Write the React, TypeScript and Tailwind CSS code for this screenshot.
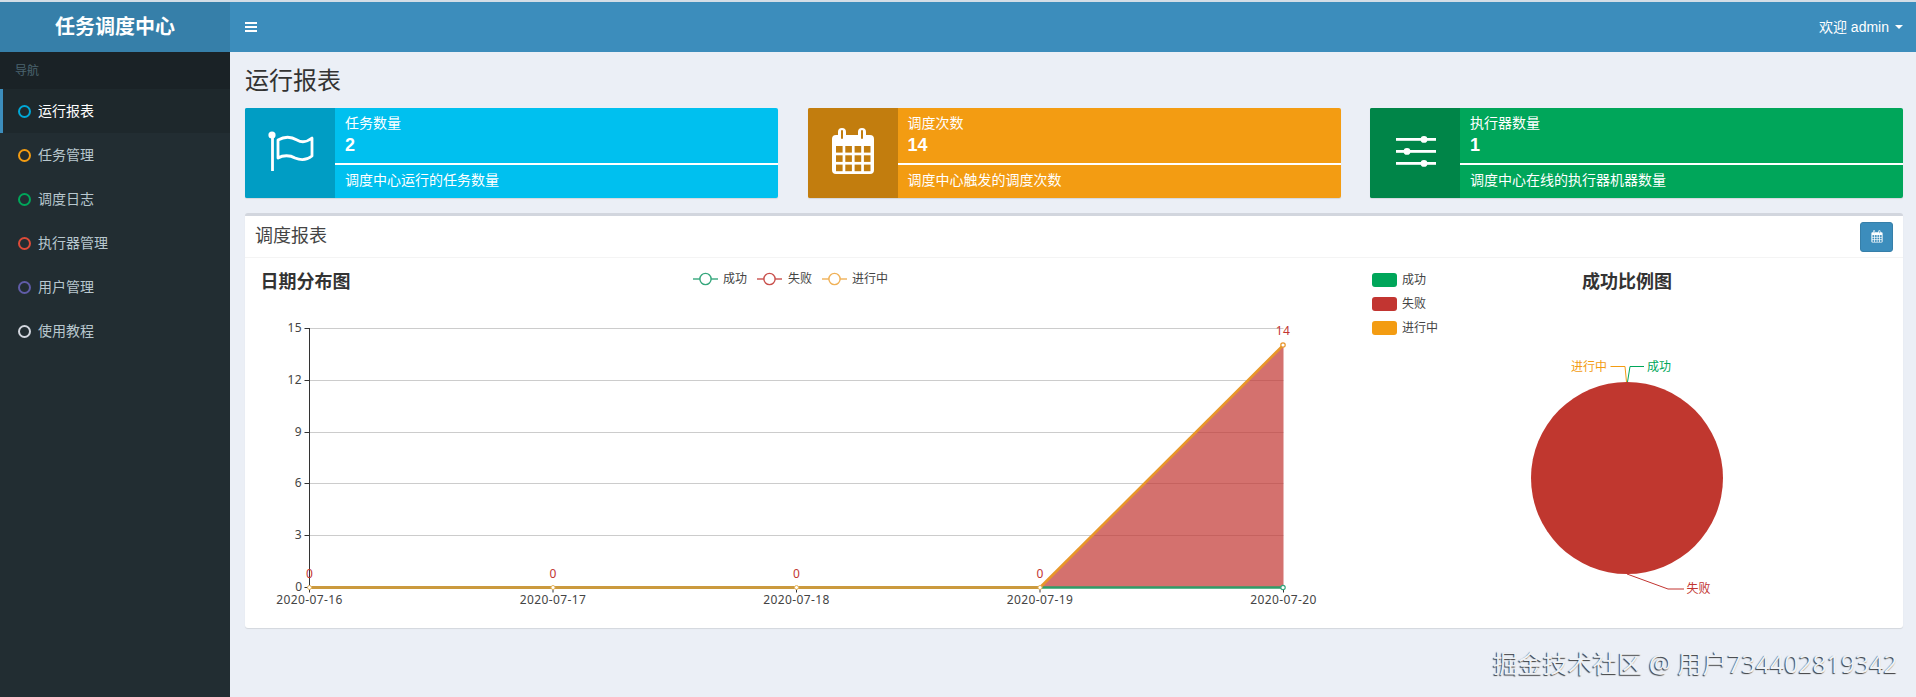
import { ReactNode } from 'react';

const menu = [
  { label: '运行报表', ring: 'border-[#00a7d6]', active: true },
  { label: '任务管理', ring: 'border-[#f39c12]' },
  { label: '调度日志', ring: 'border-[#00a65a]' },
  { label: '执行器管理', ring: 'border-[#dd4b39]' },
  { label: '用户管理', ring: 'border-[#605ca8]' },
  { label: '使用教程', ring: 'border-[#d2d6de]' },
];

function FlagIcon() {
  return (
    <svg viewBox="0 0 90 90" className="w-[90px] h-[90px]" fill="none" stroke="white">
      <circle cx="27" cy="27" r="3.6" fill="white" stroke="none" />
      <path d="M27.5 28V63" strokeWidth="2.8" />
      <path d="M33 32C40 28 47 29 52 32C57 35 62 34 67 30V48C62 52 57 53 50 50C45 47 38 47 33 50Z" strokeWidth="2.8" strokeLinejoin="round" />
    </svg>
  );
}

function CalendarIcon({ className }: { className: string }) {
  const cols = [28, 37.3, 46.6, 55.9];
  const rows = [38, 47.3, 56.6];
  return (
    <svg viewBox="0 0 90 90" className={className}>
      <path d="M24 31a4 4 0 0 1 4-4h2v-3a4 4 0 0 1 8 0v3h12v-3a4 4 0 0 1 8 0v3h4a4 4 0 0 1 4 4v31a4 4 0 0 1-4 4H28a4 4 0 0 1-4-4Z" fill="white" />
      <rect x="33" y="22" width="2" height="9" rx="1" fill="currentColor" />
      <rect x="53" y="22" width="2" height="9" rx="1" fill="currentColor" />
      {rows.map((y) =>
        cols.map((x) => <rect key={`${x}-${y}`} x={x} y={y} width="6.6" height="6.6" fill="currentColor" />)
      )}
    </svg>
  );
}

function SlidersIcon() {
  return (
    <svg viewBox="0 0 90 90" className="w-[90px] h-[90px]" fill="white" stroke="none">
      <rect x="26" y="30" width="40" height="2.8" />
      <rect x="26" y="42" width="40" height="2.8" />
      <rect x="26" y="54" width="40" height="2.8" />
      <circle cx="54" cy="31.4" r="3.4" />
      <circle cx="37" cy="43.4" r="3.4" />
      <circle cx="54" cy="55.4" r="3.4" />
    </svg>
  );
}

function InfoBox(props: { bg: string; iconBg: string; icon: ReactNode; title: string; value: string; desc: string }) {
  return (
    <div className={`flex h-[90px] rounded-[2px] overflow-hidden shadow-[0_1px_1px_rgba(0,0,0,0.1)] text-white text-sm ${props.bg}`}>
      <div className={`w-[90px] h-[90px] shrink-0 ${props.iconBg}`}>{props.icon}</div>
      <div className="flex-1 flex flex-col">
        <div className="h-[55px] pt-[5px] pl-[10px]">
          <div className="leading-5">{props.title}</div>
          <div className="text-[18px] font-bold leading-[24px]">{props.value}</div>
        </div>
        <div className="h-[2px] bg-white" />
        <div className="flex-1 flex items-center pl-[10px] pb-[3px]">{props.desc}</div>
      </div>
    </div>
  );
}

const ys = [
  { v: 15, y: 328.5 },
  { v: 12, y: 380.5 },
  { v: 9, y: 432.5 },
  { v: 6, y: 483.5 },
  { v: 3, y: 535.5 },
];
const xs = [
  { x: 309.5, d: '2020-07-16' },
  { x: 553, d: '2020-07-17' },
  { x: 796.5, d: '2020-07-18' },
  { x: 1040, d: '2020-07-19' },
  { x: 1283.5, d: '2020-07-20' },
];

function LegendMark({ x, color }: { x: number; color: string }) {
  return (
    <g stroke={color} strokeWidth="1.4" fill="white">
      <path d={`M${x} 279H${x + 25}`} />
      <circle cx={x + 12.5} cy="279" r="5.6" />
    </g>
  );
}

function LineChart() {
  return (
    <svg viewBox="245 258 1121 370" className="w-[1121px] h-[370px] shrink-0 font-['Noto_Sans','Noto_Sans_CJK_SC',sans-serif]">
      <text x="260.5" y="281" fontSize="18" fontWeight="700" fill="#333" dominantBaseline="central">日期分布图</text>

      <LegendMark x={693} color="#35a67c" />
      <text x="723" y="278" fontSize="12" fill="#444" dominantBaseline="central">成功</text>
      <LegendMark x={757} color="#c9504c" />
      <text x="788" y="278" fontSize="12" fill="#444" dominantBaseline="central">失败</text>
      <LegendMark x={822} color="#f0b157" />
      <text x="852" y="278" fontSize="12" fill="#444" dominantBaseline="central">进行中</text>

      {ys.map((t) => (
        <g key={t.v}>
          <path d={`M309.5 ${t.y}H1283.5`} stroke="#ccc" strokeWidth="1" />
          <path d={`M304.5 ${t.y}H309.5`} stroke="#333" strokeWidth="1" />
          <text x="302" y={t.y - 1.5} fontSize="12" fill="#444" letterSpacing="0.4" textAnchor="end" dominantBaseline="central">{t.v}</text>
        </g>
      ))}
      <text x="302" y="586" fontSize="12" fill="#444" textAnchor="end" dominantBaseline="central">0</text>
      <path d="M304.5 587.5H309.5M309.5 328V587.5" stroke="#333" strokeWidth="1" fill="none" />

      <path d="M1040 587.5L1283.5 345V587.5Z" fill="#c23531" fillOpacity="0.7" />

      {xs.map((t) => (
        <g key={t.d}>
          <path d={`M${t.x} 587.5V592.5`} stroke="#333" strokeWidth="1" />
          <text x={t.x} y="599" fontSize="12" fill="#444" letterSpacing="0.4" textAnchor="middle" dominantBaseline="central">{t.d}</text>
        </g>
      ))}

      <path d="M309.5 587.5H1040" stroke="#cb9a3e" strokeWidth="3" />
      <path d="M1040 587.5H1283.5" stroke="#2e9d68" strokeWidth="2.4" />
      <path d="M1040 587.5L1283.5 345" stroke="#e8962a" strokeWidth="2.6" />

      {xs.slice(0, 4).map((t) => (
        <g key={t.x}>
          <circle cx={t.x} cy="587.5" r="2" fill="white" stroke="#e3b35c" strokeWidth="1" />
          <text x={t.x} y="573" fontSize="12" fill="#c23531" textAnchor="middle" dominantBaseline="central">0</text>
        </g>
      ))}
      <circle cx="1283" cy="345" r="2.2" fill="white" stroke="#e8962a" strokeWidth="1.2" />
      <circle cx="1283" cy="587.5" r="2.2" fill="white" stroke="#35a67c" strokeWidth="1.2" />
      <text x="1283" y="330" fontSize="12" fill="#c23531" letterSpacing="0.4" textAnchor="middle" dominantBaseline="central">14</text>
    </svg>
  );
}

function PieChart() {
  return (
    <svg viewBox="1366 258 537 370" className="w-[537px] h-[370px] shrink-0 font-['Noto_Sans','Noto_Sans_CJK_SC',sans-serif]">
      <rect x="1372" y="273" width="25" height="14" rx="3" fill="#00a65a" />
      <text x="1402" y="279" fontSize="12" fill="#444" dominantBaseline="central">成功</text>
      <rect x="1372" y="297" width="25" height="14" rx="3" fill="#c23531" />
      <text x="1402" y="303" fontSize="12" fill="#444" dominantBaseline="central">失败</text>
      <rect x="1372" y="321" width="25" height="14" rx="3" fill="#f39c12" />
      <text x="1402" y="327" fontSize="12" fill="#444" dominantBaseline="central">进行中</text>

      <text x="1627" y="281" fontSize="18" fontWeight="700" fill="#333" textAnchor="middle" dominantBaseline="central">成功比例图</text>

      <circle cx="1627" cy="478" r="96" fill="#c0372f" />

      <path d="M1610.5 366.5H1625L1626.5 382" fill="none" stroke="#f39c12" strokeWidth="1" />
      <path d="M1644 366.5H1630L1627.5 382" fill="none" stroke="#00a65a" strokeWidth="1" />
      <text x="1571" y="366" fontSize="12" fill="#f39c12" dominantBaseline="central">进行中</text>
      <text x="1647" y="366" fontSize="12" fill="#00a65a" dominantBaseline="central">成功</text>
      <path d="M1627 574L1668 589H1684" fill="none" stroke="#c23531" strokeWidth="1" />
      <text x="1686.5" y="588" fontSize="12" fill="#c23531" dominantBaseline="central">失败</text>
    </svg>
  );
}

export default function App() {
  return (
    <div className="relative h-[697px] w-[1916px] overflow-hidden flex flex-col bg-[#ebeff6] font-['Liberation_Sans','Noto_Sans_CJK_SC',sans-serif]">
      <div className="h-[2px] bg-[#d3dde6] shrink-0" />
      <div className="flex flex-1 min-h-0">
        {/* Sidebar */}
        <aside className="w-[230px] shrink-0 bg-[#222d32] flex flex-col">
          <div className="h-[50px] bg-[#367fa9] flex items-center justify-center text-white text-[20px] font-bold">
            任务调度中心
          </div>
          <div className="h-[37px] bg-[#1a2226] flex items-center pl-[15px] text-xs text-[#4b646f]">导航</div>
          {menu.map((m) => (
            <div
              key={m.label}
              className={
                m.active
                  ? 'h-[44px] flex items-center pl-[18px] gap-[7px] text-sm text-white bg-[#1e282c] border-l-[3px] border-[#3c8dbc]'
                  : 'h-[44px] flex items-center pl-[18px] gap-[7px] text-sm text-[#b8c7ce]'
              }
            >
              <span className={`w-[13px] h-[13px] rounded-full border-[2.5px] shrink-0 ${m.ring} ${m.active ? '-ml-[3px]' : ''}`} />
              {m.label}
            </div>
          ))}
        </aside>

        {/* Main */}
        <div className="flex-1 min-w-0 flex flex-col">
          <header className="h-[50px] shrink-0 bg-[#3c8dbc] flex items-center justify-between pl-[15px] pr-[13px] text-white text-sm">
            <svg viewBox="0 0 12 10" className="w-[12px] h-[10px]" fill="white">
              <rect width="12" height="2" y="0" />
              <rect width="12" height="2" y="4" />
              <rect width="12" height="2" y="8" />
            </svg>
            <div className="flex items-center gap-[6px]">
              <span>欢迎 admin</span>
              <span className="w-0 h-0 border-x-[4px] border-x-transparent border-t-[4px] border-t-white" />
            </div>
          </header>

          <main className="pl-[15px] pr-[13px] pt-[15px]">
            <h1 className="h-[28px] leading-[28px] text-[24px] font-normal text-[#333] mb-[13px]">运行报表</h1>

            <div className="grid grid-cols-[533px_533px_533px] justify-between mb-[15px]">
              <InfoBox bg="bg-[#00c0ef]" iconBg="bg-[#009dc4]" icon={<FlagIcon />} title="任务数量" value="2" desc="调度中心运行的任务数量" />
              <InfoBox bg="bg-[#f39c12]" iconBg="bg-[#c27d0e]" icon={<CalendarIcon className="w-[90px] h-[90px] text-[#c27d0e]" />} title="调度次数" value="14" desc="调度中心触发的调度次数" />
              <InfoBox bg="bg-[#00a65a]" iconBg="bg-[#008548]" icon={<SlidersIcon />} title="执行器数量" value="1" desc="调度中心在线的执行器机器数量" />
            </div>

            <section className="bg-white rounded-[3px] border-t-[3px] border-[#d2d6de] shadow-[0_1px_1px_rgba(0,0,0,0.1)]">
              <div className="h-[42px] border-b border-[#f4f4f4] flex items-center justify-between pl-[10px] pr-[10px]">
                <h3 className="text-[18px] font-normal text-[#444]">调度报表</h3>
                <button className="w-[33px] h-[30px] rounded-[3px] bg-[#3c8dbc] border border-[#367fa9] flex items-center justify-center">
                  <CalendarIcon className="w-[24px] h-[24px] text-[#3c8dbc]" />
                </button>
              </div>
              <div className="flex">
                <LineChart />
                <PieChart />
              </div>
            </section>
          </main>
        </div>
      </div>

      <div className="absolute left-[1493px] top-[646px] text-[25px] tracking-[-0.1px] leading-[34px] whitespace-nowrap text-[#eef1f5] [text-shadow:-1px_1px_1px_rgba(0,0,0,0.75)] font-['Noto_Sans','Noto_Sans_CJK_SC',sans-serif]">
        掘金技术社区 @ 用户734402819342
      </div>
    </div>
  );
}
